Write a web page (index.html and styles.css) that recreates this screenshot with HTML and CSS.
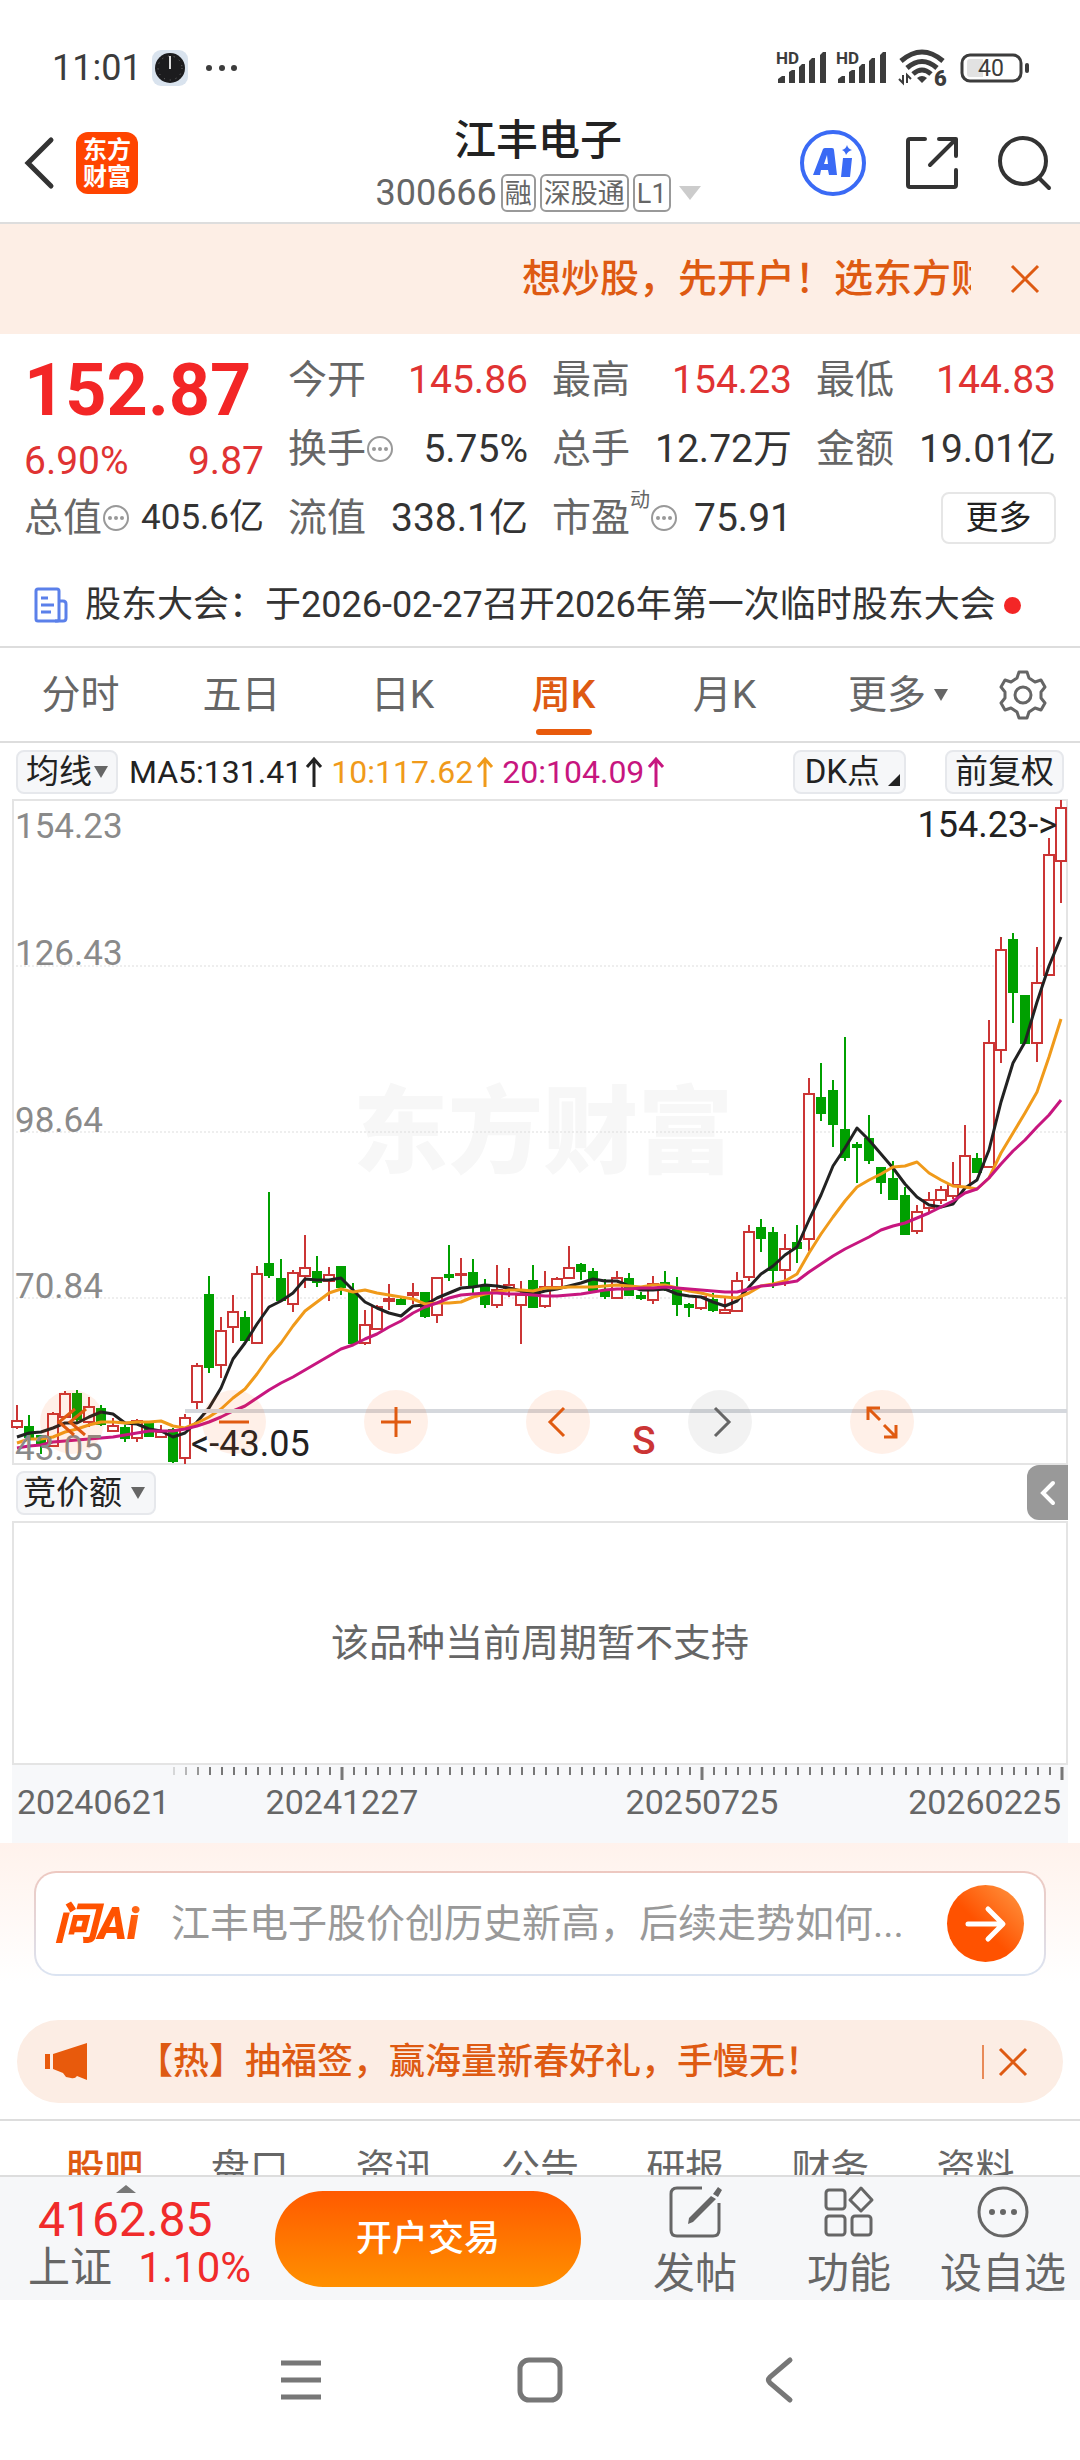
FILE: index.html
```html
<!DOCTYPE html>
<html lang="zh-CN">
<head>
<meta charset="utf-8">
<meta name="viewport" content="width=device-width, initial-scale=1">
<title>江丰电子 300666</title>
<link rel="stylesheet" href="styles.css">
</head>
<body>
<div class="status">
  <span class="status-time">11:01</span>
  <svg class="status-clock" width="36" height="36" viewBox="0 0 36 36"><rect width="36" height="36" rx="9" fill="#d9e3ee"/><circle cx="18" cy="18" r="15" fill="#1c1c1e"/><path d="M18 19V6" stroke="#ddd" stroke-width="2"/><circle cx="18" cy="18" r="12" fill="none" stroke="#777" stroke-dasharray="1 5"/></svg>
  <svg width="34" height="8" viewBox="0 0 34 8" fill="#3c3c3c"><circle cx="5" cy="4" r="3"/><circle cx="18" cy="4" r="3"/><circle cx="30" cy="4" r="3"/></svg>
  <span class="spacer"></span>
  <svg class="status-signal" width="50" height="36" viewBox="0 0 50 36" fill="#3c3c3c"><text x="0" y="14" font-size="17" font-weight="700">HD</text><path d="M2 33v-4l4-3h3v7zM13 33V22l3-2h3v13zM23 33V17l3-3h3v19zM33 33V11l3-3h3v25zM44 33V5l3-3h3v31z"/></svg>
  <svg class="status-signal" width="50" height="36" viewBox="0 0 50 36" fill="#3c3c3c"><text x="0" y="14" font-size="17" font-weight="700">HD</text><path d="M2 33v-4l4-3h3v7zM13 33V22l3-2h3v13zM23 33V17l3-3h3v19zM33 33V11l3-3h3v25zM44 33V5l3-3h3v31z"/></svg>
  <svg class="status-wifi" width="50" height="38" viewBox="0 0 50 38"><g fill="none" stroke="#3c3c3c" stroke-width="5"><path d="M2 12q21-18 42 0"/><path d="M8 19q15-13 30 0"/><path d="M14 25q9-8 18 0"/></g><path d="M18 29q5-4 10 0l-5 5z" fill="#3c3c3c"/><path d="M4 26v8l-4-4M8 34v-8l4 4" fill="none" stroke="#3c3c3c" stroke-width="2"/><text x="35" y="37" font-size="22" font-weight="900" fill="#3c3c3c" stroke="#fff" stroke-width="3" paint-order="stroke">6</text></svg>
  <svg width="70" height="30" viewBox="0 0 70 30"><rect x="2" y="2" width="59" height="26" rx="8" fill="none" stroke="#3c3c3c" stroke-width="3"/><path d="M10 6h13v18H10q-3 0-3-3V9q0-3 3-3" fill="#e2e2e2"/><rect x="65" y="10" width="4" height="10" rx="2" fill="#3c3c3c"/><text x="31" y="23" font-size="23" text-anchor="middle" fill="#3c3c3c">40</text></svg>
</div>

<header class="header">
  <div class="header-left">
    <button aria-label="返回"><svg width="30" height="52" viewBox="0 0 30 52"><path d="M27 3 4 26l23 23" fill="none" stroke="#333" stroke-width="5" stroke-linecap="round"/></svg></button>
    <a class="brand" href="#">东方<br>财富</a>
  </div>
  <div class="title">
    <h1>江丰电子</h1>
    <div class="subtitle"><span class="code">300666</span><span class="tag">融</span><span class="tag">深股通</span><span class="tag">L1</span><svg width="22" height="14" viewBox="0 0 22 14"><path d="M0 0h22L11 14z" fill="#ccc"/></svg></div>
  </div>
  <div class="header-tools">
    <button aria-label="AI"><svg width="66" height="66" viewBox="0 0 66 66"><circle cx="33" cy="33" r="31" fill="none" stroke="#3a6af5" stroke-width="4"/><path d="M13 45 23 19q1-1 2-1h7q2 0 2 2l3 25h-8l-1-5h-7l-1 5zM24 34h4l-1-9zM43 28h9l-2 19h-9zM47 15q1 4 5 5-4 1-6 5-1-4-4-5 4-1 5-5" fill="#3a6af5"/></svg></button>
    <button aria-label="分享"><svg width="54" height="54" viewBox="0 0 54 54"><path d="M20 3H5q-2 0-2 2v44q0 2 2 2h44q2 0 2-2V34M34 3h17v17M49 5 25 29" fill="none" stroke="#333" stroke-width="4" stroke-linecap="round" stroke-linejoin="round"/></svg></button>
    <button aria-label="搜索"><svg width="54" height="54" viewBox="0 0 54 54"><circle cx="25" cy="25" r="23" fill="none" stroke="#333" stroke-width="4"/><path d="m41 42 10 10" stroke="#333" stroke-width="4" stroke-linecap="round"/></svg></button>
  </div>
</header>

<section class="promo">
  <p>想炒股，先开户！选东方财富</p>
  <button aria-label="关闭"><svg width="30" height="30" viewBox="0 0 30 30"><path d="m2 2 26 26M28 2 2 28" stroke="#de5a12" stroke-width="3"/></svg></button>
</section>

<section class="quote">
  <div class="price">
    <strong>152.87</strong>
    <div class="change"><span>6.90%</span><span>9.87</span></div>
  </div>
  <div class="stat"><span>今开</span><b class="up">145.86</b></div>
  <div class="stat"><span>最高</span><b class="up">154.23</b></div>
  <div class="stat"><span>最低</span><b class="up">144.83</b></div>
  <div class="stat"><span>换手</span><svg class="info" viewBox="0 0 28 28"><use href="#info"/></svg><b>5.75%</b></div>
  <div class="stat"><span>总手</span><b>12.72万</b></div>
  <div class="stat"><span>金额</span><b>19.01亿</b></div>
  <div class="stat small"><span>总值</span><svg class="info" viewBox="0 0 28 28"><use href="#info"/></svg><b>405.6亿</b></div>
  <div class="stat"><span>流值</span><b>338.1亿</b></div>
  <div class="stat"><span>市盈</span><sup>动</sup><svg class="info" viewBox="0 0 28 28"><use href="#info"/></svg><b>75.91</b></div>
  <div class="stat"><button class="more">更多</button></div>
</section>
<svg class="defs" width="0" height="0"><defs><g id="info"><circle cx="14" cy="14" r="12" fill="none" stroke="#999" stroke-width="2"/><circle cx="8" cy="14" r="2" fill="#999"/><circle cx="14" cy="14" r="2" fill="#999"/><circle cx="20" cy="14" r="2" fill="#999"/></g></defs></svg>

<a class="notice" href="#">
  <svg width="34" height="36" viewBox="0 0 34 36"><g fill="none" stroke="#5b80ea" stroke-width="3"><rect x="2" y="2" width="23" height="32" rx="2"/><path d="M25 14h4q3 0 3 3v14q0 3-3 3H21M7 11h7M7 18h13M7 25h10"/></g></svg>
  <span>股东大会：于2026-02-27召开2026年第一次临时股东大会</span>
  <i></i>
</a>

<nav class="periods">
  <a href="#">分时</a><a href="#">五日</a><a href="#">日K</a><a href="#" class="on">周K</a><a href="#">月K</a>
  <a href="#" class="others">更多<svg width="14" height="12" viewBox="0 0 14 12"><path d="M0 0h14L7 12z" fill="#666"/></svg></a>
  <button aria-label="设置"><svg width="48" height="50" viewBox="0 0 48 50"><path d="M20 2h8l2 6 6 4 6-2 4 7-4 5v6l4 5-4 7-6-2-6 4-2 6h-8l-2-6-6-4-6 2-4-7 4-5v-6l-4-5 4-7 6 2 6-4z" fill="none" stroke="#666" stroke-width="3" stroke-linejoin="round"/><circle cx="24" cy="25" r="8" fill="none" stroke="#666" stroke-width="3"/></svg></button>
</nav>

<main class="chart">
  <div class="legend">
    <label class="chip"><select aria-label="主图指标"><option>均线</option></select><svg width="14" height="12" viewBox="0 0 14 12"><path d="M0 0h14L7 12z" fill="#666"/></svg></label>
    <span class="ma ma5">MA5:131.41<svg viewBox="0 0 18 30"><path d="M9 30V2M2 10l7-8 7 8"/></svg></span>
    <span class="ma ma10">10:117.62<svg viewBox="0 0 18 30"><path d="M9 30V2M2 10l7-8 7 8"/></svg></span>
    <span class="ma ma20">20:104.09<svg viewBox="0 0 18 30"><path d="M9 30V2M2 10l7-8 7 8"/></svg></span>
    <span class="spacer"></span>
    <button class="chip dk">DK点<svg width="12" height="12" viewBox="0 0 12 12"><path d="M12 0v12H0z" fill="#222"/></svg></button>
    <button class="chip">前复权</button>
  </div>
  <div class="kline">
    <svg id="kline" viewBox="0 0 1056 664"></svg>
    <div class="controls">
      <button aria-label="最左"><svg viewBox="0 0 64 64"><path d="M35 19 19 32l15 13M46 19 30 32l15 13"/></svg></button>
      <button aria-label="缩小"><svg viewBox="0 0 64 64"><path d="M17 32h30"/></svg></button>
      <button aria-label="放大"><svg viewBox="0 0 64 64"><path d="M17 32h30M32 17v30"/></svg></button>
      <button aria-label="左移"><svg viewBox="0 0 64 64"><path d="M38 18 24 32l14 14"/></svg></button>
      <button class="off" aria-label="右移"><svg viewBox="0 0 64 64"><path d="m27 18 14 14-14 14"/></svg></button>
      <button aria-label="全屏"><svg viewBox="0 0 64 64"><path d="M18 30V18h12M18 18l12 12M46 35v12H34M46 47 34 35"/></svg></button>
    </div>
  </div>
  <div class="sub-head">
    <label class="chip wide"><select aria-label="副图指标"><option>竞价额</option></select><svg width="14" height="12" viewBox="0 0 14 12"><path d="M0 0h14L7 12z" fill="#666"/></svg></label>
    <button class="collapse" aria-label="展开"><svg width="16" height="26" viewBox="0 0 16 26"><path d="M13 3 3 13l10 10" fill="none" stroke="#fff" stroke-width="4" stroke-linecap="round"/></svg></button>
  </div>
  <div class="sub-panel">该品种当前周期暂不支持</div>
  <svg id="axis" viewBox="0 0 1056 78"></svg>
</main>

<section class="ask">
  <form class="ask-box">
    <label class="ask-logo" for="ask">问Ai</label>
    <input id="ask" type="text" placeholder="江丰电子股价创历史新高，后续走势如何...">
    <button type="button" aria-label="提问"><svg width="42" height="36" viewBox="0 0 42 36"><path d="M3 18h34M23 3l15 15-15 15" fill="none" stroke="#fff" stroke-width="5" stroke-linecap="round" stroke-linejoin="round"/></svg></button>
  </form>
</section>

<section class="hot">
  <svg width="42" height="38" viewBox="0 0 42 38"><path d="M0 11h5v15H0zM8 11 42 0v37l-10-4q-2 3-6 2l-5-1-3-4-10-4z" fill="#e85a0c"/></svg>
  <a href="#">【热】抽福签，赢海量新春好礼，手慢无！</a>
  <button aria-label="关闭"><svg width="30" height="30" viewBox="0 0 30 30"><path d="m2 2 26 26M28 2 2 28" stroke="#de5a12" stroke-width="3"/></svg></button>
</section>

<nav class="sections"><a href="#" class="on">股吧</a><a href="#">盘口</a><a href="#">资讯</a><a href="#">公告</a><a href="#">研报</a><a href="#">财务</a><a href="#">资料</a></nav>

<footer class="toolbar">
  <a class="index" href="#">
    <svg width="20" height="8" viewBox="0 0 20 8"><path d="M0 8 10 0l10 8z" fill="#777"/></svg>
    <strong>4162.85</strong>
    <span>上证<b>1.10%</b></span>
  </a>
  <button class="trade">开户交易</button>
  <button class="tool"><svg width="54" height="54" viewBox="0 0 54 54"><path d="M34 3H9Q3 3 3 9v36q0 6 6 6h36q6 0 6-6V18" fill="none" stroke="#666" stroke-width="3"/><path d="m50 2 4 3-4 7-5-3zM43 11l5 3-23 23-5 2 1-6z" fill="#666"/></svg>发帖</button>
  <button class="tool"><svg width="54" height="54" viewBox="0 0 54 54"><g fill="none" stroke="#666" stroke-width="3"><rect x="4" y="5" width="19" height="19" rx="3"/><rect x="4" y="31" width="19" height="19" rx="3"/><rect x="30" y="31" width="19" height="19" rx="3"/><path d="m39 3 11 12-11 11-11-11z" stroke-linejoin="round"/></g></svg>功能</button>
  <button class="tool"><svg width="54" height="54" viewBox="0 0 54 54"><circle cx="27" cy="27" r="24" fill="none" stroke="#666" stroke-width="3"/><g fill="#666"><circle cx="16" cy="27" r="3"/><circle cx="27" cy="27" r="3"/><circle cx="38" cy="27" r="3"/></g></svg>设自选</button>
</footer>

<div class="system">
  <button aria-label="最近任务"><svg width="46" height="46" viewBox="0 0 46 46"><path d="M3 6h40M3 23h40M3 40h40" stroke="#777" stroke-width="5"/></svg></button>
  <button aria-label="主屏幕"><svg width="46" height="46" viewBox="0 0 46 46"><rect x="3" y="3" width="40" height="40" rx="9" fill="none" stroke="#777" stroke-width="5"/></svg></button>
  <button aria-label="返回"><svg width="46" height="46" viewBox="0 0 46 46"><path d="M34 3 14 20q-3 3 0 6l20 17" fill="none" stroke="#777" stroke-width="5" stroke-linecap="round"/></svg></button>
</div>
<script src="chart.js"></script>
</body>
</html>
```
FILE: styles.css
```css
* { box-sizing: border-box; }
body {
  margin: 0;
  background: #fff;
  color: #333;
  font-family: Roboto, "Noto Sans CJK SC", sans-serif;
  font-size: 39px;
  line-height: 48px;
}
button, select, input { font: inherit; color: inherit; border: 0; padding: 0; background: none; }
button { display: flex; align-items: center; justify-content: center; }
a { color: inherit; text-decoration: none; }
svg { display: block; flex: none; overflow: visible; }
.spacer { flex: 1; }
.defs { position: absolute; }

.status { display: flex; align-items: center; height: 108px; padding: 28px 50px 0 52px; }
.status-time { font-size: 36px; color: #3c3c3c; width: 100px; }
.status-clock { margin-right: 16px; }
.status-signal { margin-right: 10px; }
.status-wifi { margin: 0 11px 0 3px; }

.header { display: grid; grid-template-columns: 1fr auto 1fr; align-items: center; height: 116px; padding: 0 28px 4px 24px; border-bottom: 2px solid #ddd; }
.header-left { display: flex; align-items: center; gap: 22px; }
.brand { width: 62px; height: 62px; border-radius: 12px; background: #ff4400; color: #fff; font-size: 24px; font-weight: 700; line-height: 27px; text-align: center; padding-top: 5px; }
.title { padding-top: 4px; }
.title h1 { margin: 0; font-size: 42px; font-weight: 500; line-height: 56px; text-align: center; color: #222; }
.subtitle { display: flex; align-items: center; justify-content: center; gap: 4px; height: 48px; color: #666; }
.code { font-size: 36px; }
.tag { height: 38px; padding: 0 2px; border: 2px solid #999; border-radius: 6px; font-size: 27px; line-height: 36px; }
.subtitle svg { margin-left: 4px; }
.header-tools { display: flex; align-items: center; justify-content: flex-end; gap: 39px; }

.promo { display: flex; align-items: center; height: 110px; padding: 0 40px 0 522px; background: #fdeee5; color: #de5a12; font-weight: 500; }
.promo p { flex: 1; margin: 0 39px 0 0; overflow: hidden; white-space: nowrap; }

.quote { display: grid; grid-template-columns: repeat(4, 1fr); grid-auto-rows: 69px; column-gap: 24px; padding: 11px 24px 0; }
.price { grid-row: span 2; color: #f32626; }
.price strong { display: block; font-size: 72px; line-height: 92px; font-weight: 700; }
.change { display: flex; justify-content: space-between; color: #e03333; }
.stat { display: flex; align-items: center; color: #666; white-space: nowrap; }
.stat b { margin-left: auto; font-weight: 400; color: #333; }
.stat .up { color: #e03333; }
.stat.small b { font-size: 35px; }
.stat sup { font-size: 20px; line-height: 20px; align-self: flex-start; margin-top: 7px; }
.info { width: 28px; height: 28px; }
.more { width: 115px; height: 52px; margin-left: auto; border: 2px solid #e6e6e6; border-radius: 8px; font-size: 33px; color: #222; }

.notice { display: flex; align-items: center; height: 96px; padding: 12px 34px 0; border-bottom: 2px solid #ddd; font-size: 36px; white-space: nowrap; }
.notice span { margin: 0 8px 0 17px; }
.notice i { width: 17px; height: 17px; border-radius: 50%; background: #f32626; }

.periods { display: grid; grid-template-columns: repeat(6, 1fr) 114px; height: 95px; border-bottom: 2px solid #ddd; color: #666; }
.periods a { display: flex; align-items: center; justify-content: center; gap: 8px; position: relative; }
.periods .others { justify-content: flex-end; padding-right: 18px; }
.periods .on { color: #de5a12; font-weight: 500; }
.periods .on::after { content: ""; position: absolute; left: 50%; bottom: 6px; width: 56px; height: 6px; margin-left: -28px; border-radius: 3px; background: #e85a0c; }

.chart { padding: 0 12px; }
.legend { display: flex; align-items: center; height: 57px; padding: 0 4px; }
.chip { display: flex; align-items: center; justify-content: center; height: 44px; padding: 0 8px; border: 2px solid #e6e8ec; border-radius: 8px; background: #f6f7f9; color: #222; font-size: 33px; }
.chip select { appearance: none; -webkit-appearance: none; }
.chip svg { margin-left: 2px; }
.chip.wide { padding: 0 9px 0 5px; }
.chip.wide svg { margin-left: 9px; }
.chip.dk { margin-right: 39px; padding: 0 4px 0 10px; }
.chip.dk svg { align-self: flex-end; margin: 0 0 6px 8px; }
.ma { display: flex; align-items: center; gap: 3px; font-size: 32px; margin-right: 8px; }
.ma svg { width: 18px; height: 30px; fill: none; stroke: currentColor; stroke-width: 3; }
.ma5 { margin-left: 11px; color: #222; }
.ma10 { color: #f09a1a; }
.ma20 { color: #c7167f; }

.kline { position: relative; }
.kline > svg, #axis { width: 100%; height: auto; }
.grid { stroke: #ddd; stroke-dasharray: 2 2; }
.frame { fill: none; stroke: #e4e4e4; stroke-width: 2; }
.watermark { font-size: 95px; font-weight: 900; fill: #f7f7f7; }
.axis-label { font-size: 35px; fill: #8a8a8a; }
.mark { font-size: 36px; fill: #222; }
.sell { font-size: 39px; font-weight: 500; fill: #cb3535; }
.line { fill: none; stroke-width: 3; stroke-linejoin: round; }
.candle-up { fill: #fff; stroke: #cb3535; stroke-width: 2; }
.candle-down { fill: #00a000; stroke: #00a000; stroke-width: 2; }
.controls { position: absolute; left: 28px; bottom: 10px; display: flex; gap: 98px; }
.controls button { width: 64px; height: 64px; border-radius: 50%; background: rgba(255, 90, 0, .09); color: #e05a10; }
.controls .off { background: rgba(0, 0, 0, .05); color: #666; }
.controls svg { width: 64px; height: 64px; fill: none; stroke: currentColor; stroke-width: 3; }

.sub-head { display: flex; align-items: center; justify-content: space-between; height: 57px; padding-left: 4px; }
.collapse { width: 41px; height: 55px; border-radius: 12px 0 0 12px; background: #999; }
.sub-panel { display: flex; align-items: center; justify-content: center; height: 244px; border: 2px solid #e4e4e4; font-size: 38px; color: #666; }
.date { font-size: 34px; fill: #666; }
#axis { background: #f7f8fa; }

.ask { height: 177px; padding: 28px 34px 0; background: linear-gradient(#fff2ec, #fff 140px); }
.ask-box { display: flex; align-items: center; height: 105px; padding: 0 20px 0 18px; border: 2px solid transparent; border-radius: 22px; background: linear-gradient(#fff, #fff) padding-box, linear-gradient(#edc8c0, #dbe4f2) border-box; }
.ask-logo { width: 117px; font-size: 44px; font-weight: 900; font-style: italic; color: transparent; background: linear-gradient(75deg, #ff5200 60%, #ff9a50); -webkit-background-clip: text; background-clip: text; white-space: nowrap; }
.ask-box input { flex: 1; min-width: 0; color: #333; outline: 0; }
.ask-box input::placeholder { color: #999; opacity: 1; }
.ask-box button { width: 77px; height: 77px; border-radius: 50%; background: linear-gradient(45deg, #ff5200 45%, #ff9a45); }

.hot { display: flex; align-items: center; height: 83px; margin: 0 17px 16px; padding: 0 35px 0 28px; border-radius: 42px; background: #fcede4; color: #de5a12; font-size: 36px; }
.hot a { flex: 1; margin-left: 50px; white-space: nowrap; font-weight: 500; }
.hot button { height: 34px; padding-left: 14px; border-left: 2px solid #e88a58; }

.sections { display: flex; height: 56px; padding: 20px 32px 0; border-top: 2px solid #ddd; overflow: hidden; color: #666; }
.sections a { flex: 1; text-align: center; line-height: 56px; }
.sections .on { color: #de5a12; font-weight: 500; }

.toolbar { display: flex; align-items: center; height: 125px; background: #f6f7f9; border-top: 2px solid #ddd; color: #666; }
.index { width: 275px; align-self: stretch; padding: 8px 24px 0 28px; }
.index svg { margin-left: 88px; }
.index strong { display: block; padding-left: 10px; font-size: 48px; line-height: 54px; font-weight: 400; color: #f02b2b; }
.index span { display: flex; justify-content: space-between; align-items: center; font-size: 42px; line-height: 42px; }
.index b { font-weight: 400; color: #f02b2b; }
.trade { flex: 1; height: 96px; margin-right: 37px; border-radius: 48px; background: linear-gradient(#ff5a00, #ff9000); color: #fff; font-size: 36px; font-weight: 500; }
.tool { width: 154px; height: 100%; flex-direction: column; justify-content: flex-start; gap: 9px; padding-top: 8px; font-size: 42px; line-height: 52px; white-space: nowrap; }

.system { display: flex; justify-content: center; align-items: center; gap: 193px; height: 160px; }
```
FILE: chart.js
```js
// Weekly candles: colour, high, body top, body bottom, low (chart units, y down).
const candles = `r605,621,627,629 g615,627,637,638 g635,636,644,654 r612,614,646,646 r591,594,617,617 g590,594,619,623 r597,607,622,627 g605,609,624,626
r618,626,631,631 g625,628,638,642 r619,621,638,642 g621,622,636,636 r625,632,637,637 g628,630,661,663 r614,618,658,664 r563,566,602,609
g476,495,567,573 r517,531,565,578 r495,512,527,543 g511,518,540,540 r466,474,543,543 g392,464,475,478 g459,479,500,500 r470,473,504,512
r435,468,476,488 g456,472,482,487 r467,475,481,501 g466,467,487,495 g483,493,543,543 r510,525,543,545 r505,507,529,529 r484,499,501,510
g498,500,504,505 r483,493,495,504 g493,493,516,518 r477,478,515,523 g445,475,477,481 r458,474,475,486 g459,473,486,493 g479,487,504,508
r465,490,505,508 r468,485,488,497 r481,495,505,544 g465,481,507,508 r471,487,506,508 r477,479,487,487 r446,468,478,478 g463,465,471,480
g468,472,490,490 g479,491,496,499 r471,478,498,498 g473,479,495,495 g492,496,498,500 r476,484,500,504 g471,483,486,491 g477,490,504,516
g503,505,507,517 r497,497,508,510 g493,500,510,512 r498,510,513,514 r472,481,511,511 r425,432,477,481 g419,428,438,452 g427,433,470,488
r434,449,470,486 g425,443,448,463 r278,294,439,451 g263,298,313,321 g280,291,324,347 g237,330,357,361 g342,345,347,383 g315,339,360,364
g367,368,382,394 g361,379,399,399 g387,396,434,435 r405,412,431,434 r392,400,408,412 r386,390,400,404 r362,385,396,399 r325,356,387,387
g353,359,372,372 r220,243,367,367 r137,150,250,263 g133,140,192,223 g196,196,243,243 r147,183,243,262 r38,55,175,175 r0,8,61,103`.split(/\s+/);

const averages = {
  '#222': [637,633,632,628,623,623,617,612,614,623,624,629,631,637,633,622,608,588,559,543,524,507,501,493,479,480,480,478,490,502,508,513,516,506,505,498,493,488,487,485,486,488,491,494,491,489,486,483,479,481,481,486,490,490,489,494,496,497,502,506,501,487,474,466,455,447,420,395,366,348,328,340,354,368,384,397,405,407,404,388,380,350,302,263,242,202,166,137],
  '#f09a1a': [643,639,639,637,632,629,625,622,622,623,622,622,621,626,628,623,617,609,598,589,574,557,543,526,511,502,493,489,492,490,493,495,497,499,504,503,503,502,497,494,492,490,490,491,488,488,487,487,487,486,485,486,487,485,485,488,491,493,496,497,498,493,486,484,481,474,453,434,417,401,387,380,374,367,366,362,373,380,386,387,389,378,353,333,313,292,257,219],
  '#c7167f': [648,646,645,642,641,640,639,638,637,635,633,631,631,631,629,626,622,617,611,606,598,590,583,577,570,563,556,549,545,539,534,527,521,513,507,503,498,495,494,493,493,494,494,495,496,496,495,494,492,490,489,489,488,488,487,488,489,490,491,492,492,489,486,485,483,481,472,464,456,449,443,437,430,426,423,418,413,407,401,393,389,378,364,351,340,327,315,300]
};

const xAt = i => 5 + i * 12;
let out = '<text class="watermark" x="341" y="366">东方财富</text>';
for (const y of [166, 332, 498]) out += `<path class="grid" d="M0 ${y}H1056"/>`;
out += '<rect class="frame" x="1" y="0" width="1054" height="664"/>';

candles.forEach((c, i) => {
  const [high, top, bottom, low] = c.slice(1).split(',').map(Number);
  const x = xAt(i), kind = c[0] === 'r' ? 'up' : 'down';
  const w = kind === 'up' ? 5 : 4;
  out += `<path class="candle-${kind}" d="M${x} ${high}V${top}M${x} ${bottom}V${low}M${x - w} ${top}H${x + w}V${bottom}H${x - w}Z"/>`;
});
for (const [color, ys] of Object.entries(averages)) {
  out += `<polyline class="line" stroke="${color}" points="${ys.map((y, i) => xAt(i) + ',' + y).join(' ')}"/>`;
}
out += '<path d="M173 611H1055" stroke="#d5d8dd" stroke-width="4"/>';
[['154.23', 38], ['126.43', 165], ['98.64', 332], ['70.84', 498], ['43.05', 660]].forEach(([t, y]) => {
  out += `<text class="axis-label" x="3" y="${y}">${t}</text>`;
});
out += '<text class="mark" x="1045" y="37" text-anchor="end">154.23-&gt;</text>';
out += '<text class="mark" x="179" y="656">&lt;-43.05</text><text class="sell" x="620" y="654">S</text>';
document.getElementById('kline').innerHTML = out;

let axis = '';
for (let x = 162, n = 0; x <= 1050; x += 12, n++) {
  const major = [330, 690, 1050].includes(x);
  axis += `<path d="M${x} 2V${major ? 15 : 10}" stroke="#777" stroke-width="${major ? 3 : 2}" opacity="${Math.min(1, (n + 1) / 4)}"/>`;
}
[['20240621', 5, 'start'], ['20241227', 330, 'middle'], ['20250725', 690, 'middle'], ['20260225', 1049, 'end']].forEach(([t, x, a]) => {
  axis += `<text class="date" x="${x}" y="49" text-anchor="${a}">${t}</text>`;
});
document.getElementById('axis').innerHTML = axis;
```
